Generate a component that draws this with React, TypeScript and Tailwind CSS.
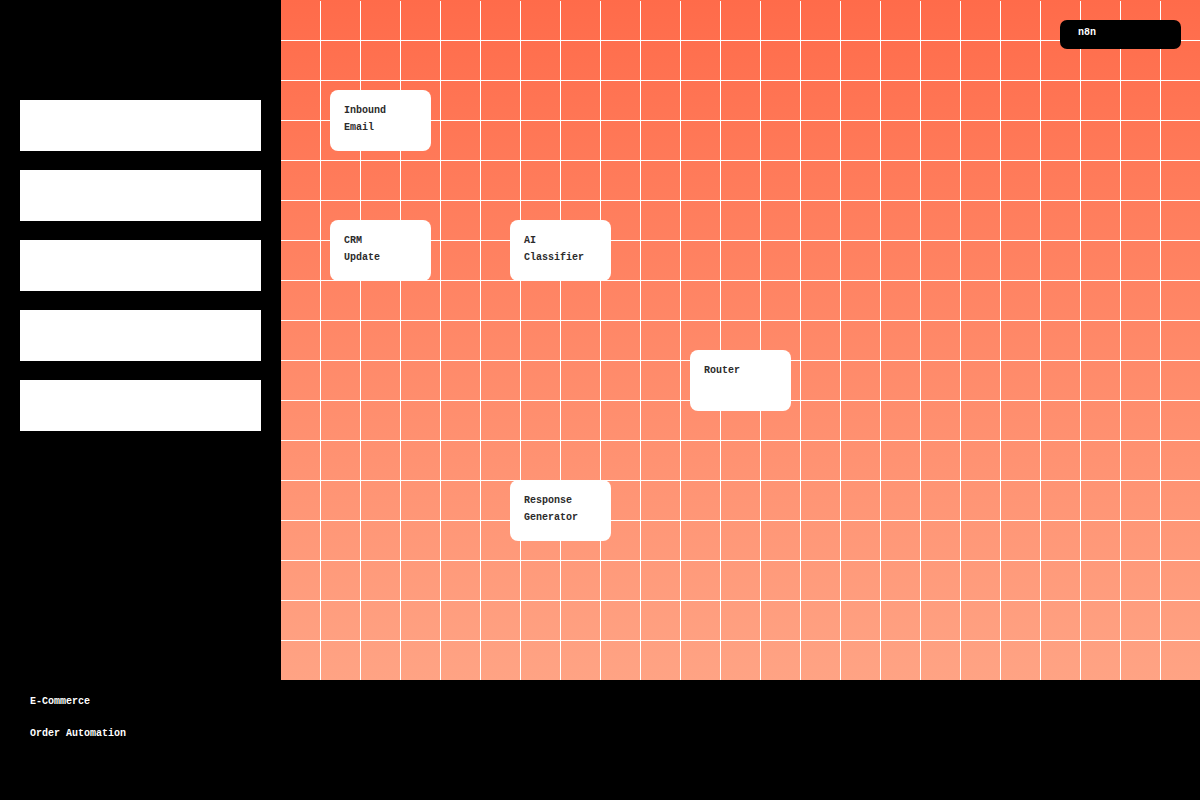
const mono = { fontFamily: '"Liberation Mono", "Courier New", monospace' };

type FlowNode = {
  id: string;
  lines: string[];
  left: string;
  top: string;
};

const nodes: FlowNode[] = [
  { id: "inbound", lines: ["Inbound", "Email"], left: "left-[49px]", top: "top-[90px]" },
  { id: "crm", lines: ["CRM", "Update"], left: "left-[49px]", top: "top-[220px]" },
  { id: "classifier", lines: ["AI", "Classifier"], left: "left-[229px]", top: "top-[220px]" },
  { id: "router", lines: ["Router"], left: "left-[409px]", top: "top-[350px]" },
  { id: "response", lines: ["Response", "Generator"], left: "left-[229px]", top: "top-[480px]" },
];

function Sidebar() {
  return (
    <aside className="flex w-[281px] shrink-0 flex-col gap-[19px] bg-black px-5 pt-[100px]">
      {[0, 1, 2, 3, 4].map((i) => (
        <div key={i} className="h-[51px] w-full bg-white" />
      ))}
    </aside>
  );
}

function Canvas() {
  return (
    <main className="relative flex-1 overflow-hidden bg-gradient-to-b from-[#ff6b4a] to-[#ffa384]">
      {/* grid lines */}
      <div className="absolute inset-x-0 bottom-0 top-px bg-[linear-gradient(to_right,transparent_39px,#ffffff_39px),linear-gradient(to_bottom,transparent_39px,#ffffff_39px)] bg-[length:40px_40px]" />

      {nodes.map((node) => (
        <div
          key={node.id}
          className={`absolute ${node.left} ${node.top} h-[61px] w-[101px] rounded-[8px] bg-white pl-[14px] pt-[12px] text-[10px] font-bold leading-[17px] text-[#2b2b2b]`}
          style={mono}
        >
          {node.lines.map((line) => (
            <div key={line}>{line}</div>
          ))}
        </div>
      ))}

      <div
        className="absolute right-[19px] top-5 h-[29px] w-[121px] rounded-[7px] bg-black pl-[18px] pt-[6px] text-[10px] font-bold leading-[14px] text-white"
        style={mono}
      >
        n8n
      </div>
    </main>
  );
}

export default function App() {
  return (
    <div className="flex h-[800px] w-[1200px] flex-col bg-black">
      <div className="flex h-[680px]">
        <Sidebar />
        <Canvas />
      </div>
      <footer className="flex-1 bg-black pl-[30px] pt-[13px] text-[10px] font-bold leading-[17px] text-white" style={mono}>
        <p>E-Commerce</p>
        <p className="mt-[15px]">Order Automation</p>
      </footer>
    </div>
  );
}
